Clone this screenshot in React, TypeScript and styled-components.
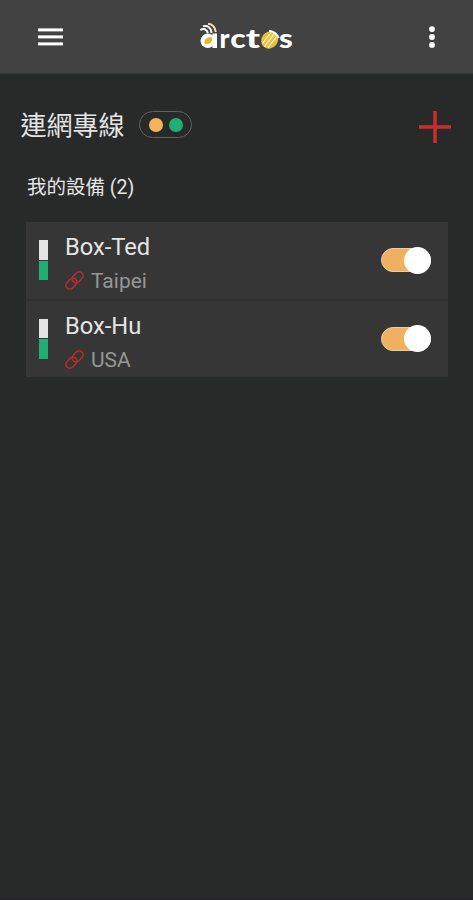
import React, { useState } from "react";
import styled, { createGlobalStyle } from "styled-components";

const GlobalStyle = createGlobalStyle`
  * { box-sizing: border-box; }
  body { margin: 0; background: #282a29; }
  button { padding: 0; border: 0; background: none; cursor: pointer; }
`;

const Screen = styled.div`
  height: 900px;
  background: #282a29;
  border-bottom: 1px solid #2b222a;
  font-family: Roboto, "Noto Sans CJK TC", sans-serif;
  color: #e4e4e4;
`;

const Header = styled.header`
  height: 74px;
  padding: 0 38px 0 38px;
  display: flex;
  align-items: center;
  justify-content: space-between;
  background: #424242;
  border-bottom: 1px solid #363737;
`;

const IconButton = styled.button<{ $width: number }>`
  width: ${(p) => p.$width}px;
  display: flex;
  svg { display: block; }
`;

const Logo = styled.svg`
  display: block;
  margin-right: 1px;
  font-family: Lato, sans-serif;
  font-weight: 900;
  fill: #fff;
`;

const TitleRow = styled.div`
  height: 101px;
  padding: 2px 22px 0 20.5px;
  display: flex;
  align-items: center;
`;

const Title = styled.h1`
  margin: 0;
  font-size: 26px;
  line-height: 38px;
  font-weight: 400;
`;

const Status = styled.div`
  width: 53px;
  height: 27px;
  margin-top: -2px;
  margin-left: 14.5px;
  margin-right: auto;
  display: flex;
  align-items: center;
  justify-content: center;
  gap: 6px;
  border: 1px solid #606161;
  border-radius: 14px;
`;

const Dot = styled.span<{ $color: string }>`
  width: 14px;
  height: 14px;
  border-radius: 50%;
  background: ${(p) => p.$color};
`;

const AddButton = styled(IconButton)`
  margin-top: 2px;
`;

const Subtitle = styled.h2`
  margin: 0;
  padding: 1px 0 0 27px;
  height: 47px;
  font-size: 19.5px;
  line-height: 24px;
  font-weight: 400;
`;

const List = styled.div`
  margin: 0 25px 0 26px;
  display: flex;
  flex-direction: column;
  gap: 2px;
  background: #2e2f2f;
`;

const Card = styled.article`
  height: 76.5px;
  padding: 0 17px 0 13px;
  display: flex;
  align-items: center;
  background: #363636;
`;

const Signal = styled.div`
  width: 9px;
  margin-right: 17px;
  display: flex;
  flex-direction: column;
  gap: 1px;
`;

const Level = styled.span<{ $color: string }>`
  height: 19.5px;
  background: ${(p) => p.$color};
`;

const Info = styled.div`
  flex: 1;
  padding-top: 7px;
`;

const Name = styled.div`
  height: 35px;
  font-size: 23.7px;
  line-height: 28px;
`;

const Place = styled.div`
  height: 26px;
  display: flex;
  align-items: center;
  gap: 7px;
  font-size: 21px;
  line-height: 26px;
  color: #969696;
`;

const Track = styled.button`
  width: 50px;
  height: 24px;
  display: flex;
  align-items: center;
  border-radius: 12px;
  border: 1px solid #e9ceaa;
  background: #efb160;
`;

const Knob = styled.span<{ $on: boolean }>`
  flex: none;
  width: 27px;
  height: 27px;
  margin-left: ${(p) => (p.$on ? 22 : 0)}px;
  border-radius: 50%;
  background: #fff;
`;

const ChainIcon = () => (
  <svg width="19" height="20" viewBox="0 0 19 20" fill="none" stroke="#bd2d2d" strokeWidth="1.5">
    <g transform="rotate(-45 9.5 9.5)">
      <rect x="-1" y="5.6" width="12.2" height="7.8" rx="3.9" />
      <rect x="7.8" y="5.6" width="12.2" height="7.8" rx="3.9" />
    </g>
  </svg>
);

const ArctosLogo = () => (
  <Logo width="94" height="34" viewBox="198 20 94 34" role="img" aria-label="arctos">
    <g fill="none" stroke="#fff" strokeWidth="2">
      <path d="M199.3 30 Q204.5 27 207 33" />
      <path d="M202 26.3 Q209 24.5 210.7 33" />
      <path d="M207 23.7 Q213.5 24 214.8 32" stroke="#ece4b0" />
    </g>
    <ellipse cx="206.8" cy="40.8" rx="7.3" ry="7.2" />
    <path d="M211.5 33.5 H216 V48 H211.5 Z" />
    <path d="M203.6 43.8 Q202.2 37.4 210.8 37 Q212.3 45.4 203.6 43.8 Z" fill="#dfb928" />
    <text x="218.6" y="47.8" fontSize="26" textLength="10" lengthAdjust="spacingAndGlyphs">r</text>
    <text x="229.2" y="47.8" fontSize="26" textLength="15.5" lengthAdjust="spacingAndGlyphs">c</text>
    <text x="244.8" y="47.8" fontSize="27" textLength="14.3" lengthAdjust="spacingAndGlyphs">t</text>
    <g transform="rotate(38 268.6 40)">
      <ellipse cx="268.6" cy="40" rx="8.2" ry="9" fill="#e4c13e" />
      <path d="M265.2 33.5 V47 M268.6 32 V48.5 M272 33.5 V47" stroke="#fff5d0" strokeWidth="1.1" />
      <path d="M262.5 33 Q268.6 29.4 274.7 33" fill="none" stroke="#fff" strokeWidth="2" />
    </g>
    <text x="278" y="47.8" fontSize="26" textLength="13.8" lengthAdjust="spacingAndGlyphs">s</text>
  </Logo>
);

const Device = ({ name, place }: { name: string; place: string }) => {
  const [on, setOn] = useState(true);
  return (
    <Card>
      <Signal>
        <Level $color="#e4e4e4" />
        <Level $color="#20ad78" />
      </Signal>
      <Info>
        <Name>{name}</Name>
        <Place>
          <ChainIcon />
          {place}
        </Place>
      </Info>
      <Track role="switch" aria-checked={on} aria-label={name} onClick={() => setOn(!on)}>
        <Knob $on={on} />
      </Track>
    </Card>
  );
};

const devices = [
  { name: "Box-Ted", place: "Taipei" },
  { name: "Box-Hu", place: "USA" },
];

export default function App() {
  return (
    <>
      <GlobalStyle />
      <Screen>
        <Header>
          <IconButton $width={25} aria-label="Menu">
            <svg width="25" height="18" viewBox="0 0 25 18" fill="#fff">
              <rect y="0.4" width="25" height="3" />
              <rect y="7.4" width="25" height="3" />
              <rect y="14.4" width="25" height="3" />
            </svg>
          </IconButton>
          <ArctosLogo />
          <IconButton $width={6} aria-label="More">
            <svg width="6" height="22" viewBox="0 0 6 22" fill="#fff">
              <circle cx="3" cy="3.1" r="2.9" />
              <circle cx="3" cy="11" r="2.9" />
              <circle cx="3" cy="18.9" r="2.9" />
            </svg>
          </IconButton>
        </Header>
        <TitleRow>
          <Title>連網專線</Title>
          <Status>
            <Dot $color="#f4b25f" />
            <Dot $color="#20ad78" />
          </Status>
          <AddButton $width={32} aria-label="Add">
            <svg width="32" height="32" viewBox="0 0 32 32" stroke="#cb2c2c" strokeWidth="3.5">
              <path d="M16 0 V32 M0 16 H32" />
            </svg>
          </AddButton>
        </TitleRow>
        <Subtitle>我的設備 (2)</Subtitle>
        <List>
          {devices.map((d) => (
            <Device key={d.name} {...d} />
          ))}
        </List>
      </Screen>
    </>
  );
}
